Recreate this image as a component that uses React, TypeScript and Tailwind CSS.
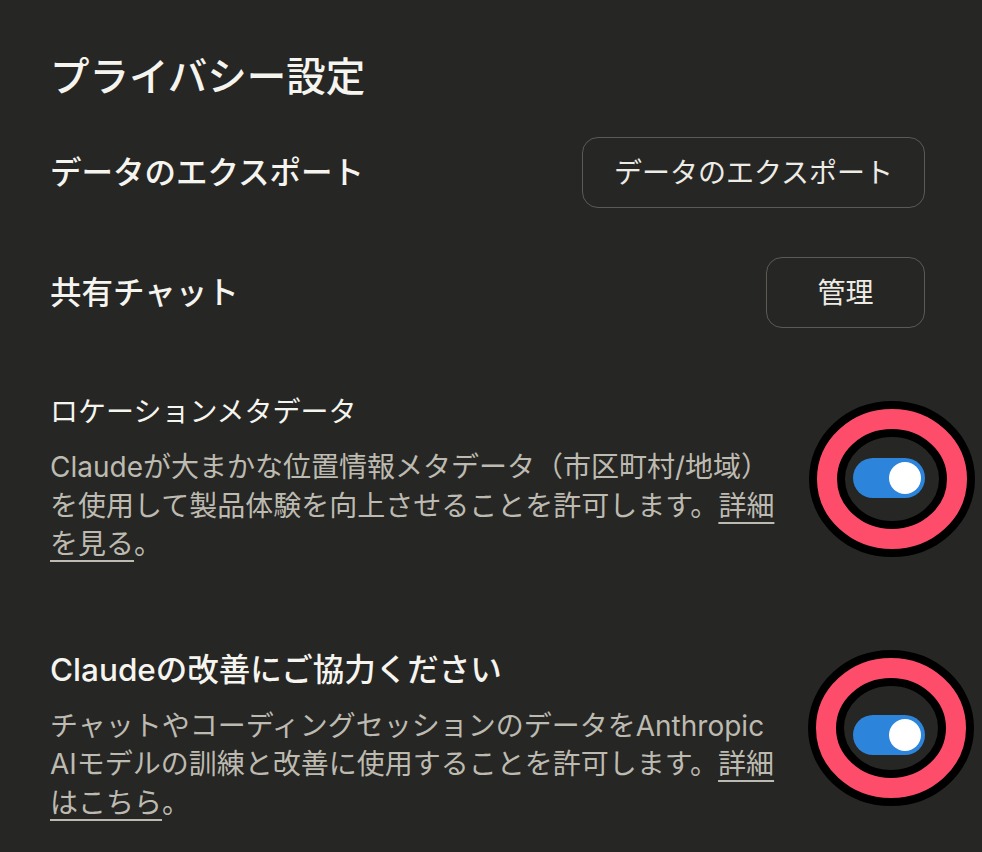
import { useState } from 'react';

const fontStack = { fontFamily: 'Inter, "Noto Sans CJK JP", sans-serif' };

function Toggle({ on, onChange }: { on: boolean; onChange: () => void }) {
  return (
    <button
      type="button"
      onClick={onChange}
      className={`flex h-[40px] w-[72px] items-center rounded-full px-[4px] ${
        on ? 'justify-end bg-[#2c84db]' : 'justify-start bg-[#5a5955]'
      }`}
    >
      <span className="block h-[32px] w-[32px] rounded-full bg-white" />
    </button>
  );
}

// red annotation ring drawn around a toggle
function Ring({ className }: { className: string }) {
  return (
    <svg
      width="170"
      height="160"
      viewBox="0 0 170 160"
      className={`pointer-events-none absolute ${className}`}
    >
      <ellipse cx="85" cy="80" rx="65" ry="60" fill="none" stroke="#000" strokeWidth="36" />
      <ellipse cx="85" cy="80" rx="65" ry="60" fill="none" stroke="#fe4d6b" strokeWidth="20" />
    </svg>
  );
}

export default function App() {
  const [location, setLocation] = useState(true);
  const [improve, setImprove] = useState(true);

  return (
    <div className="min-h-screen bg-[#262624] pl-[50px] pr-[57px] pt-[52px] text-[#f5f4ef]" style={fontStack}>
      <h1 className="text-[39.5px] font-medium leading-[50px]">プライバシー設定</h1>

      {/* Export */}
      <div className="mt-[35px] flex h-[71px] items-center justify-between">
        <span className="text-[31.5px] font-medium leading-[42px]">データのエクスポート</span>
        <button
          type="button"
          className="flex h-[71px] w-[343px] items-center justify-center rounded-[16px] border border-[#5b5a55] text-[28px] text-[#ecebe5]"
        >
          データのエクスポート
        </button>
      </div>

      {/* Shared chats */}
      <div className="mt-[49px] flex h-[71px] items-center justify-between">
        <span className="text-[31.5px] font-medium leading-[42px]">共有チャット</span>
        <button
          type="button"
          className="flex h-[71px] w-[159px] items-center justify-center rounded-[16px] border border-[#5b5a55] text-[28px] text-[#ecebe5]"
        >
          管理
        </button>
      </div>

      {/* Location metadata */}
      <div className="mt-[64px] flex items-center justify-between">
        <div className="w-[735px]">
          <p className="text-[28px] leading-[40px]">ロケーションメタデータ</p>
          <p className="mt-[16px] text-[28px] leading-[38.5px] text-[#bdbbb1]">
            Claudeが大まかな位置情報メタデータ（市区町村/地域）を使用して製品体験を向上させることを許可します。
            <span className="underline decoration-2 underline-offset-[6px]">詳細を見る</span>。
          </p>
        </div>
        <div className="relative">
          <Toggle on={location} onChange={() => setLocation(!location)} />
          <Ring className="left-[-46px] top-[-59px]" />
        </div>
      </div>

      {/* Help improve Claude */}
      <div className="mt-[85px] flex items-center justify-between pb-[30px]">
        <div className="w-[735px]">
          <p className="text-[31.5px] font-medium leading-[42px]">Claudeの改善にご協力ください</p>
          <p className="mt-[16px] text-[28px] leading-[38.5px] text-[#bdbbb1]">
            チャットやコーディングセッションのデータをAnthropic AIモデルの訓練と改善に使用することを許可します。
            <span className="underline decoration-2 underline-offset-[6px]">詳細はこちら</span>。
          </p>
        </div>
        <div className="relative">
          <Toggle on={improve} onChange={() => setImprove(!improve)} />
          <Ring className="left-[-47px] top-[-67px]" />
        </div>
      </div>
    </div>
  );
}
